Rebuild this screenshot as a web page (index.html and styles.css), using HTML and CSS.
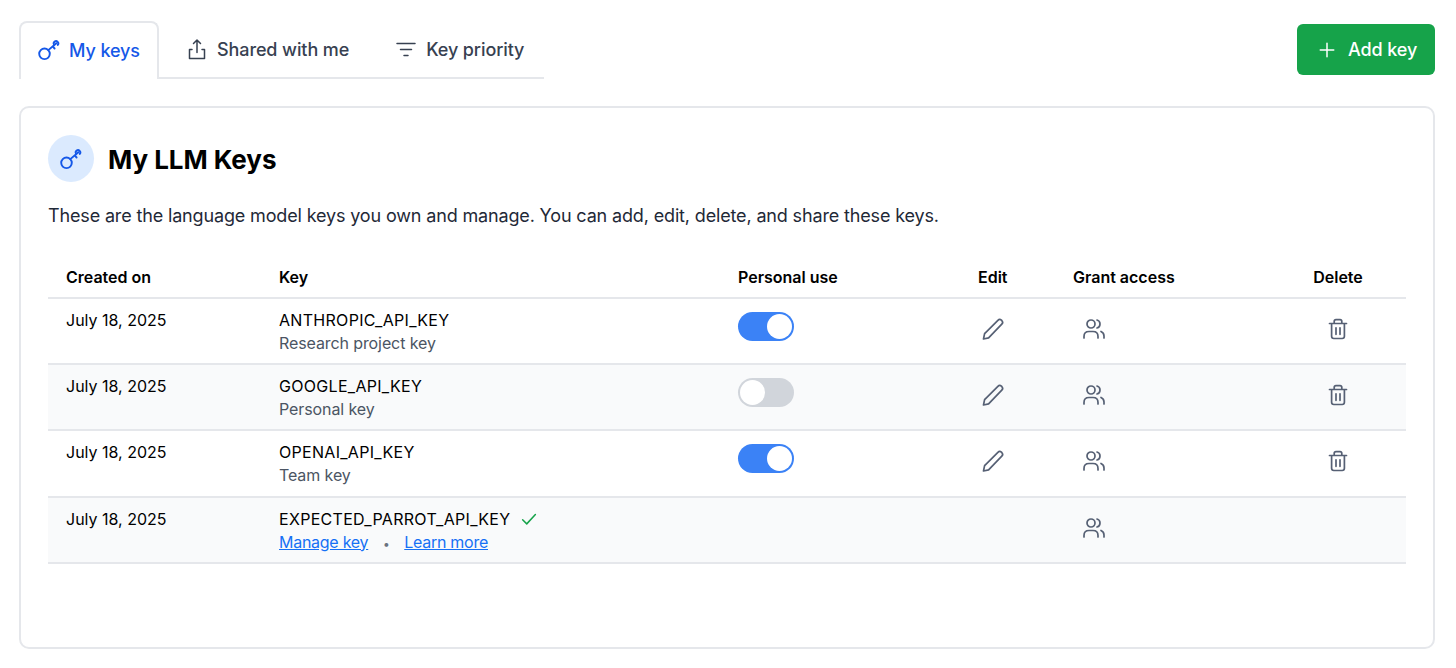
FILE: index.html
```html
<!DOCTYPE html>
<html lang="en">
<head>
<meta charset="utf-8">
<title>My LLM Keys</title>
<link rel="stylesheet" href="styles.css">
</head>
<body>
<svg class="defs" width="0" height="0" aria-hidden="true">
  <defs>
    <symbol id="key" viewBox="0 0 24 24"><circle cx="7.500" cy="15.800" r="5.300"/><path d="M11.300 12.100 19.400 5.200M15.700 8.400l1.900 2.100"/><path d="M17 6.600a2.300 2.300 0 1 1 3.800.3"/></symbol>
    <symbol id="pencil" viewBox="0 0 24 24"><path d="M2.500 22l1.100-5.300L16.900 3.300c1-1 2.500-1 3.500-.1l.5.500c.9 1 .9 2.500-.1 3.500L7.600 20.800 2.500 22z"/></symbol>
    <symbol id="users" viewBox="0 0 24 24"><circle cx="9" cy="7" r="4"/><path d="M2 21v-1.500c0-3 2-5 5-5h4c3 0 5 2 5 5V21M15 3c2 .5 3 2.200 3 4s-1 3.500-3 4M19 14.500c1.800.8 3 2.500 3 4.500v2"/></symbol>
    <symbol id="trash" viewBox="0 0 24 24"><path d="M3.500 6.500h17M8.200 6.500V4.500c0-1 .8-1.800 1.800-1.800h4c1 0 1.800.8 1.800 1.800v2M5.600 6.500v12.800c0 1.200 1 2.200 2.200 2.200h8.400c1.200 0 2.200-1 2.200-2.200V6.500M10 10.800v6.500M14 10.800v6.500"/></symbol>
  </defs>
</svg>
<main class="page">
  <header class="topbar">
    <nav class="tabs">
      <a class="tab tab-active"><svg class="icon tab-icon key-icon"><use href="#key"/></svg>My keys</a>
      <a class="tab"><svg class="icon tab-icon" viewBox="0 0 24 24"><path d="M7 12.500H4.500V21.500H19.500V12.500H17M12 15.500V3M8.500 6.500 12 3l3.500 3.500"/></svg>Shared with me</a>
      <a class="tab"><svg class="icon tab-icon" viewBox="0 0 24 24"><path d="M3 6.500h18M6.500 12.500h11M10 18.500h4"/></svg>Key priority</a>
    </nav>
    <button class="add-btn"><svg class="icon plus-icon" viewBox="0 0 24 24"><path d="M12 3v18M3 12h18"/></svg>Add key</button>
  </header>

  <section class="card">
    <div class="card-head">
      <span class="badge"><svg class="icon badge-icon key-icon"><use href="#key"/></svg></span>
      <h1>My LLM Keys</h1>
    </div>
    <p class="intro">These are the language model keys you own and manage. You can add, edit, delete, and share these keys.</p>

    <table class="keys">
      <colgroup><col class="c1"><col class="c2"><col class="c3"><col class="c4"><col class="c5"><col class="c6"></colgroup>
      <thead>
        <tr><th>Created on</th><th>Key</th><th>Personal use</th><th>Edit</th><th>Grant access</th><th class="center">Delete</th></tr>
      </thead>
      <tbody>
        <tr>
          <td>July 18, 2025</td>
          <td><div class="name">ANTHROPIC_API_KEY</div><div class="sub">Research project key</div></td>
          <td><span class="switch on"></span></td>
          <td><svg class="icon act edit"><use href="#pencil"/></svg></td>
          <td><svg class="icon act grant"><use href="#users"/></svg></td>
          <td class="center"><svg class="icon act del"><use href="#trash"/></svg></td>
        </tr>
        <tr class="alt">
          <td>July 18, 2025</td>
          <td><div class="name">GOOGLE_API_KEY</div><div class="sub">Personal key</div></td>
          <td><span class="switch"></span></td>
          <td><svg class="icon act edit"><use href="#pencil"/></svg></td>
          <td><svg class="icon act grant"><use href="#users"/></svg></td>
          <td class="center"><svg class="icon act del"><use href="#trash"/></svg></td>
        </tr>
        <tr>
          <td>July 18, 2025</td>
          <td><div class="name">OPENAI_API_KEY</div><div class="sub">Team key</div></td>
          <td><span class="switch on"></span></td>
          <td><svg class="icon act edit"><use href="#pencil"/></svg></td>
          <td><svg class="icon act grant"><use href="#users"/></svg></td>
          <td class="center"><svg class="icon act del"><use href="#trash"/></svg></td>
        </tr>
        <tr class="alt">
          <td>July 18, 2025</td>
          <td>
            <div class="name">EXPECTED_PARROT_API_KEY<svg class="icon check" viewBox="0 0 24 24"><path d="M3.500 13l5.500 5.500L20.500 6"/></svg></div>
            <div class="sub links"><a>Manage key</a><span class="dot">•</span><a>Learn more</a></div>
          </td>
          <td></td>
          <td></td>
          <td><svg class="icon act grant"><use href="#users"/></svg></td>
          <td></td>
        </tr>
      </tbody>
    </table>
  </section>
</main>
</body>
</html>
```

FILE: styles.css
```css
* { box-sizing: border-box; }
html, body { margin: 0; background: #fff; }
body { font-family: Inter, "Liberation Sans", sans-serif; color: #111827; overflow: hidden; }
.defs { position: absolute; }
.page { width: 1456px; height: 668px; padding: 21px 21px 0 19px; }

.icon { fill: none; stroke: currentColor; stroke-width: 1.5; stroke-linecap: round; stroke-linejoin: round; flex: none; }
.key-icon { stroke-width: 1.9; }

.topbar { display: flex; justify-content: space-between; align-items: flex-start; height: 85px; }
.tabs { display: flex; width: 525px; height: 58px; border-bottom: 2px solid #e5e7eb; }
.tab { display: flex; flex: none; align-items: center; gap: 8px; height: 58px; padding: 0 22px 2px 23px; font-size: 18px; font-weight: 500; color: #374151; letter-spacing: -0.1px; white-space: nowrap; }
.tab-active { width: 140px; margin-right: 3px; color: #1558e8; background: #fff; border: 2px solid #e5e7eb; border-bottom: 0; border-radius: 8px 8px 0 0; padding: 0 0 2px 16px; }
.tab-icon { width: 24px; height: 24px; }
.add-btn { display: flex; align-items: center; gap: 12px; width: 138px; height: 51px; margin-top: 3px; padding: 0 0 0 21px; border: 0; border-radius: 6px; background: #16a34a; color: #fff; font: 500 18px Inter, "Liberation Sans", sans-serif; letter-spacing: -0.1px; }
.plus-icon { width: 18px; height: 18px; stroke-width: 2; }

.card { height: 543px; padding: 27px; border: 2px solid #e5e7eb; border-radius: 10px; }
.card-head { display: flex; align-items: center; gap: 14px; }
.badge { display: flex; align-items: center; justify-content: center; width: 46px; height: 47px; border-radius: 50%; background: #dbeafe; color: #1558e8; }
.badge-icon { width: 24px; height: 24px; }
h1 { margin: 2px 0 0; font-size: 26px; line-height: 32px; font-weight: 700; color: #000; letter-spacing: -0.05px; }
.intro { margin: 22px 0 0; font-size: 18px; line-height: 24px; color: #1f2937; letter-spacing: -0.15px; }

.keys { width: 1358px; margin-top: 29px; border-collapse: collapse; table-layout: fixed; font-size: 16px; }
.c1 { width: 213px; } .c2 { width: 459px; } .c3 { width: 240px; } .c4 { width: 95px; } .c5 { width: 215px; } .c6 { width: 136px; }
th { height: 41px; padding: 0 18px; text-align: left; font-weight: 600; color: #000; font-size: 16px; border-bottom: 2px solid #e5e7eb; }
td { height: 66.200px; padding: 9px 18px 0; vertical-align: top; border-bottom: 2px solid #e5e7eb; line-height: 24px; color: #000; }
.center { text-align: center; }
.alt { background: #f9fafb; }
.name { display: flex; align-items: center; height: 24px; letter-spacing: 0.3px; }
.sub { height: 23px; line-height: 23px; color: #4b5563; letter-spacing: -0.1px; }
.check { width: 18px; height: 18px; margin-left: 10px; color: #16a34a; stroke-width: 2; }
.links a { color: #1570f5; text-decoration: underline; letter-spacing: -0.27px; }
.dot { display: inline-block; width: 36px; text-align: center; color: #6b7280; font-size: 12px; }

.switch { position: relative; display: block; width: 56px; height: 29px; margin-top: 4px; border-radius: 15px; background: #d1d5db; }
.switch::after { content: ""; position: absolute; top: 2px; left: 2px; width: 25px; height: 25px; border-radius: 50%; background: #fff; }
.switch.on { background: #3b82f6; }
.switch.on::after { left: 29px; }

.act { display: block; color: #566074; stroke-width: 1.7; }
.edit { width: 24px; height: 24px; margin: 9px 0 0 3px; }
.grant { width: 24px; height: 24px; margin: 9px 0 0 9px; }
.del { width: 24px; height: 24px; margin: 9px auto 0; }
```
